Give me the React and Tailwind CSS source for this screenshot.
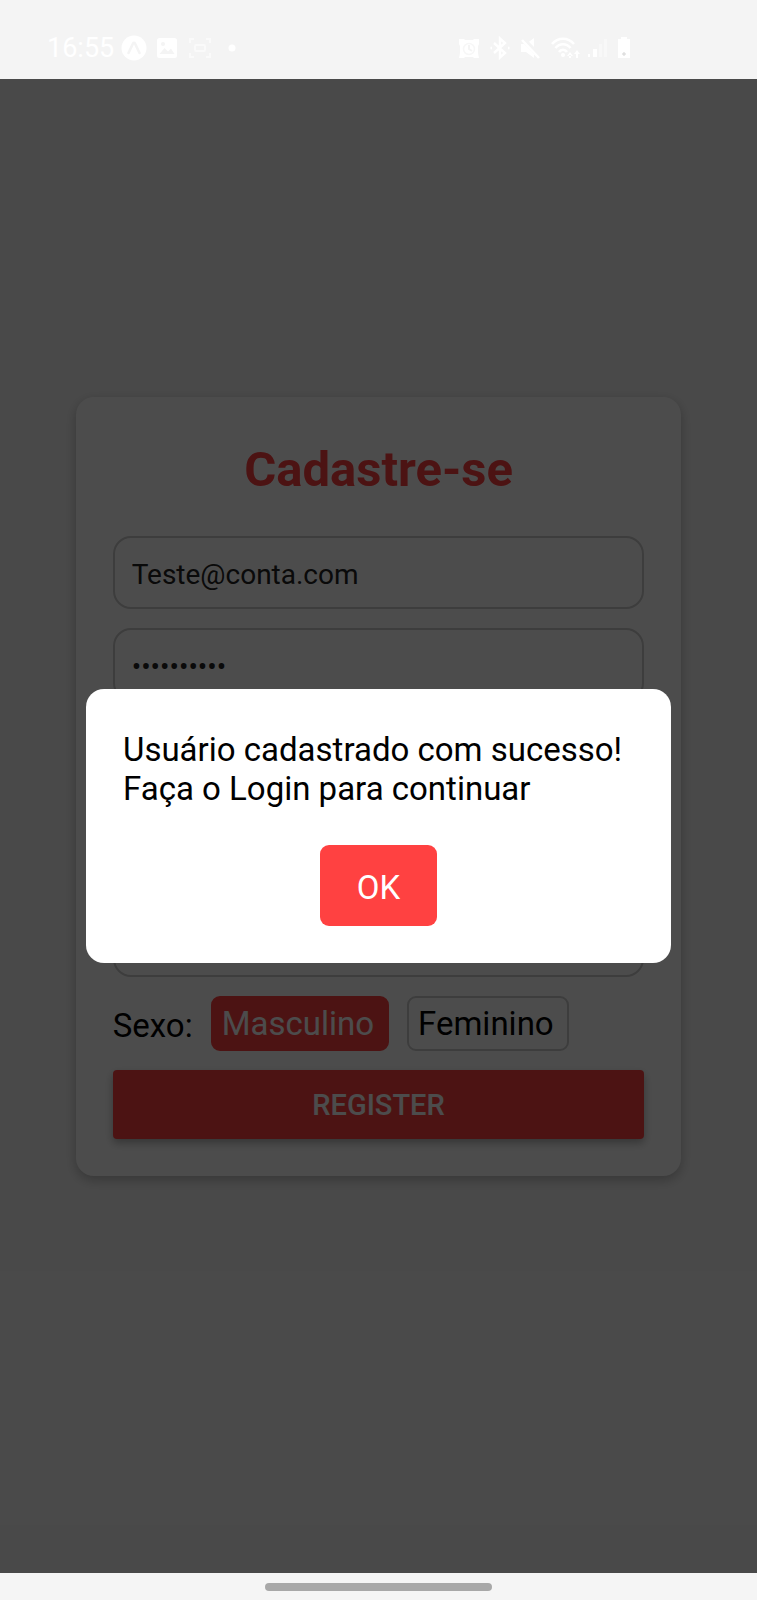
import { useState } from "react";

const FIELD =
  "h-[73px] w-full rounded-[18px] border-2 border-[#cccccc] bg-white px-[17px] pt-[3px] text-[28px] text-[#222222] outline-none";

function StatusBar() {
  return (
    <header className="z-20 col-start-1 row-start-1 flex items-center justify-between bg-[#f4f4f4] pt-4 pr-[123px] pl-[47px] text-white">
      <div className="flex items-center gap-[7px]">
        <time className="text-[27px] leading-8">16:55</time>
        <svg width="26" height="26" viewBox="0 0 26 26" aria-hidden="true">
          <circle cx="13" cy="13" r="12.5" fill="#fff" />
          <path d="M7.5 18 12 8.5c.5-1 1.500-1 2 0L18.500 18" fill="none" stroke="#f4f4f4" strokeWidth="2.600" strokeLinecap="round" />
        </svg>
        <svg width="26" height="26" viewBox="0 0 26 26" aria-hidden="true">
          <rect x="3" y="3" width="20" height="20" rx="2.500" fill="#fff" />
          <circle cx="9" cy="9" r="2" fill="#f4f4f4" />
          <path d="m5.500 19 5-6 3.500 3.500 3-3 3.500 5.500z" fill="#f4f4f4" />
        </svg>
        <svg width="26" height="26" viewBox="0 0 26 26" fill="none" stroke="#fafafa" strokeWidth="2" aria-hidden="true">
          <path d="M3 8V4h4M19 4h4v4M23 18v4h-4M7 22H3v-4" />
          <rect x="8" y="10" width="10" height="6" rx="1" />
        </svg>
        <svg width="26" height="26" viewBox="0 0 26 26" aria-hidden="true">
          <circle cx="12" cy="13" r="3.500" fill="#fff" />
        </svg>
      </div>
      <div className="flex items-center gap-[7px]">
        <svg width="24" height="24" viewBox="0 0 24 24" aria-hidden="true">
          <path d="M2 3h5l1 1h8l1-1h5v5l-1 2v7l1 5h-5l-1-1H8l-1 1H2l1-5v-7L2 8z" fill="#fff" />
          <circle cx="12" cy="13" r="5.500" fill="none" stroke="#f7f7f7" strokeWidth="1.500" />
          <path d="M12 9v4l3 2" fill="none" stroke="#f4f4f4" strokeWidth="2" />
        </svg>
        <svg width="24" height="24" viewBox="0 0 24 24" fill="none" stroke="#fff" strokeWidth="2.400" aria-hidden="true">
          <path d="m6 7 11 10-5 4.500v-19L17 7 6 17M2.500 12h1.500M20 12h1.500" />
        </svg>
        <svg width="24" height="24" viewBox="0 0 24 24" aria-hidden="true">
          <path d="M2 8h5l8-6v20l-8-6H2z" fill="#fff" />
          <path d="m3 2 18 19" stroke="#f4f4f4" strokeWidth="5" />
          <path d="m3 4 17 18" stroke="#fff" strokeWidth="2.500" />
        </svg>
        <svg width="30" height="24" viewBox="0 0 30 24" aria-hidden="true">
          <path d="M2 8c6-7 16-7 22 0M5.500 12c4-5 11-5 15 0M9 16c2-3 6-3 8 0" fill="none" stroke="#fff" strokeWidth="2.600" />
          <circle cx="13" cy="19" r="2" fill="#fff" />
          <path d="m20 16-3 4h6zM27 14l-3 4h6zM19 19h2v3h-2zM26 18h2v4h-2z" fill="#fff" />
        </svg>
        <svg width="20" height="24" viewBox="0 0 20 24" aria-hidden="true">
          <path d="M1 18h2v3H1zM6 13h4v8H6z" fill="#fff" />
          <path d="M12 8h3v13h-3zM17 3h3v18h-3z" fill="#f8f8f8" />
        </svg>
        <svg width="20" height="24" viewBox="0 0 20 24" aria-hidden="true">
          <path d="M7 1h6v2h3v19H4V3h3z" fill="#fff" />
          <path d="M8 18h4M10 16v4" stroke="#d5d5d5" />
        </svg>
      </div>
    </header>
  );
}

function GenderOption({ label, selected, onSelect }) {
  return (
    <button
      type="button"
      aria-pressed={selected}
      onClick={onSelect}
      className={
        selected
          ? "h-[55px] rounded-[9px] border-2 border-[#ff4141] bg-[#ff4141] pr-[13px] pl-[9px] text-[33px] leading-[39px] text-white"
          : "h-[55px] rounded-[9px] border-2 border-[#cccccc] bg-white pr-[13px] pl-[9px] text-[33px] leading-[39px] text-black"
      }
    >
      {label}
    </button>
  );
}

function RegisterCard() {
  const [gender, setGender] = useState("Masculino");
  return (
    <form
      onSubmit={(e) => e.preventDefault()}
      className="flex w-4/5 flex-col gap-[19px] rounded-[18px] bg-white p-[37px] shadow-[0_4px_12px_rgba(0,0,0,0.25)]"
    >
      <h1 className="mb-3 text-center text-[49px] leading-[71px] font-bold text-[#ff4141]">Cadastre-se</h1>
      <input type="email" aria-label="Email" defaultValue="Teste@conta.com" className={FIELD} />
      <input type="password" aria-label="Senha" defaultValue="1234567890" className={FIELD} />
      <input type="text" aria-label="Nome" className={FIELD} />
      <input type="text" aria-label="Telefone" className={FIELD} />
      <input type="text" aria-label="Idade" className={FIELD} />
      <div className="flex items-center gap-[18px]" role="group" aria-labelledby="gender-label">
        <span id="gender-label" className="pt-[3px] text-[33px] leading-[39px] text-black">Sexo:</span>
        {["Masculino", "Feminino"].map((label) => (
          <GenderOption key={label} label={label} selected={gender === label} onSelect={() => setGender(label)} />
        ))}
      </div>
      <button
        type="submit"
        className="h-[69px] rounded-[4px] bg-[#ff4141] pt-[3px] text-[29px] font-medium text-white shadow-[0_4px_8px_rgba(0,0,0,0.3)]"
      >
        REGISTER
      </button>
    </form>
  );
}

function SuccessDialog({ onClose }) {
  return (
    <div className="z-10 col-start-1 row-start-2 flex items-center bg-black/70 px-[86px]">
      <div
        role="dialog"
        aria-modal="true"
        aria-labelledby="dialog-text"
        className="flex w-full flex-col items-center gap-[37px] rounded-[18px] bg-white p-[37px]"
      >
        <p id="dialog-text" className="w-full pt-1 text-[33px] leading-[39px] text-black">
          Usuário cadastrado com sucesso!
          <br />
          Faça o Login para continuar
        </p>
        <button
          type="button"
          onClick={onClose}
          className="h-[81px] rounded-[9px] bg-[#ff4141] px-[37px] pt-[3px] text-[33px] leading-[39px] text-white"
        >
          OK
        </button>
      </div>
    </div>
  );
}

export default function App() {
  const [open, setOpen] = useState(true);
  return (
    <div className="grid min-h-screen grid-cols-1 grid-rows-[79px_1fr_27px] bg-[#f5f5f5] font-[Roboto,sans-serif]">
      <StatusBar />
      <main className="col-start-1 row-span-2 row-start-1 flex items-center justify-center">
        <RegisterCard />
      </main>
      {open && <SuccessDialog onClose={() => setOpen(false)} />}
      <footer className="col-start-1 row-start-3 flex items-center justify-center bg-[#f5f5f5]">
        <div className="h-2 w-[30%] rounded-full bg-[#a8a8a8]" />
      </footer>
    </div>
  );
}
